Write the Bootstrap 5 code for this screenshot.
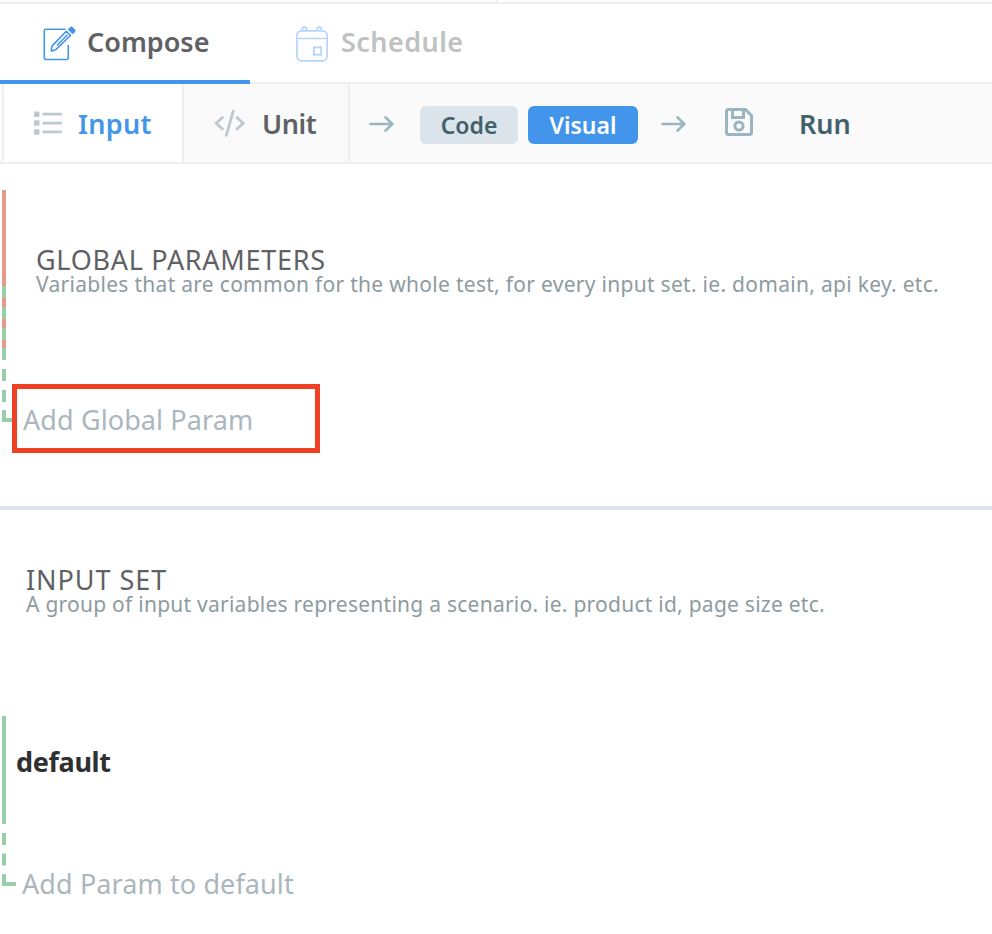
<!DOCTYPE html>
<html lang="en">
<head>
<meta charset="utf-8">
<meta name="viewport" content="width=device-width, initial-scale=1">
<title>Compose</title>
<link rel="stylesheet" href="https://cdn.jsdelivr.net/npm/bootstrap@5.3.0/dist/css/bootstrap.min.css">
<style>
body{font-family:"Noto Sans","Open Sans",sans-serif;font-size:27px;line-height:40px;color:#5f6164;background:#fff;overflow:hidden;white-space:nowrap}
svg{display:block;flex:none}
.topline{height:4px;border-bottom:2px solid #eee}
.topline span{width:2px;height:2px;margin-left:496px;background:#eee}
.maintabs{height:80px;border-bottom:2px solid #eee}
.maintabs .nav-link{height:80px;border:0;border-radius:0;font-weight:600;font-size:27px;color:#5f6164}
.maintabs .active{width:250px;border-bottom:4px solid #4295ea;padding:0 0 0 42px!important}
.maintabs .later{padding:0 0 4px 46px!important;color:#c0c1c2}
.tool{height:80px;background:#fafafa;border-bottom:2px solid #eee;font-weight:600;padding-left:2px}
.cell{height:78px;border-right:2px solid #eee}
.cell-input{width:182px;background:#fff;border-left:2px solid #eee;color:#4295ea;padding-left:30px}
.cell-unit{width:166px;padding-left:30px}
.pill{height:38px;font-size:23px;line-height:38px;font-weight:600;border:0;border-radius:6px;padding:0;margin-top:4px}
.pill-code{width:98px;background:#dce4eb;color:#40606a;margin-left:25px}
.pill-visual{width:110px;background:#4295ea;color:#fff;margin-left:10px}
.arrow-in{margin-left:15px;margin-right:1px;margin-top:1px}
.arrow-out{margin-left:23px;margin-top:1px}
.save{margin-left:38px;margin-right:1px;margin-top:-2px}
.run{color:#40606a;margin-left:45px;padding-top:2px}
.t-compose{margin-left:11px}
.t-schedule{margin-left:13px;letter-spacing:.45px}
.cal{margin-top:3px}
.t-input{margin-left:16px;letter-spacing:.3px;padding-top:2px}
.t-unit{margin-left:16px;letter-spacing:-.4px;padding-top:2px}
.params{height:346px;border-bottom:4px solid #dae4ec;padding:26px 0 0 2px}
.g-head{padding:56px 0 0 24px;height:194px}
.heading{font-size:27px;line-height:28px;font-weight:400;margin:0}
.g-title{letter-spacing:.7px}
.i-title{letter-spacing:.95px}
.hint{font-size:21px;line-height:24px;color:#8d9ba0;margin:-2px 0 0}
.g-hint{letter-spacing:.29px}
.i-hint{letter-spacing:.25px}
.add{color:#abb6bd;letter-spacing:.1px}
.marked{width:308px;height:69px;border:5px solid #ee4023;padding:3px 0 0 6px;background:#fff}
.sets{padding-top:56px}
.i-title,.i-hint{padding-left:26px}
.setrow{padding-left:2px;margin-top:100px}
.setbody{padding-top:26px}
.setname{color:#2f3031;font-weight:700;font-size:27px;letter-spacing:-.35px}
.t-add2{margin:82px 0 0 6px}
</style>
<script src="https://cdn.jsdelivr.net/npm/bootstrap@5.3.0/dist/js/bootstrap.bundle.min.js"></script>
</head>
<body>
<div class="topline"><span class="d-block"></span></div>
<nav class="maintabs nav flex-nowrap">
  <a class="nav-link active d-flex align-items-center" href="#">
    <svg width="34" height="38" viewBox="0 0 34 38" fill="none" stroke="#4295ea" stroke-width="1.6"><path d="M23.500 6.300H3.800a1.500 1.500 0 0 0-1.500 1.500V35a1.500 1.500 0 0 0 1.500 1.500h21a1.500 1.500 0 0 0 1.500-1.500V22"/><path d="M24.300 8.300l4.200 4.200L14 26.400q-2 1.400-4.700 1.500 0-2.900 1.100-5.300zM25.500 11.800L14.800 22.500" stroke-linejoin="round"/><path d="M26.300 6.400l1.900-2q1-.9 2-.1l2.500 2.500q.9 1 0 2l-2.100 2.100z" fill="#4295ea" stroke-width="1"/></svg>
    <span class="t-compose">Compose</span>
  </a>
  <a class="nav-link later d-flex align-items-center" href="#">
    <svg class="cal" width="32" height="36" viewBox="0 0 32 36" fill="none" stroke="#b5d5f8" stroke-width="1.7"><rect x=".9" y="4.800" width="30.200" height="30" rx="4.500"/><path d="M1 12.500h30M6.300 5V2.900q0-1.700 1.600-1.700h1q1.600 0 1.600 1.700V5M21.100 5V2.900q0-1.700 1.600-1.700h1q1.600 0 1.600 1.700V5"/><rect x="17.900" y="21.400" width="7.300" height="7.300" stroke-width="1.900"/></svg>
    <span class="t-schedule">Schedule</span>
  </a>
</nav>
<div class="tool d-flex">
  <div class="cell cell-input d-flex align-items-center">
    <svg width="28" height="24" viewBox="0 0 28 24" fill="#bdc9cf"><rect y=".5" width="5.500" height="5.500" rx="1"/><rect y="9.300" width="5.500" height="5.500" rx="1"/><rect y="18.200" width="5.500" height="5.500" rx="1"/><rect x="8.500" y="1.800" width="19.500" height="2.700" rx="1"/><rect x="8.500" y="10.700" width="19.500" height="2.700" rx="1"/><rect x="8.500" y="19.500" width="19.500" height="2.700" rx="1"/></svg>
    <span class="t-input">Input</span>
  </div>
  <div class="cell cell-unit d-flex align-items-center">
    <svg width="32" height="28" viewBox="0 0 32 28" fill="none" stroke="#bdc9cf" stroke-width="2.800"><path d="M9.200 7.800L2.200 14.300l7 6.500M22.200 7.800l7 6.500-7 6.500M19.500 1L12 27.500"/></svg>
    <span class="t-unit">Unit</span>
  </div>
  <div class="d-flex align-items-center">
    <svg class="arrow-in" width="29" height="18" viewBox="0 0 29 18" fill="none" stroke="#9ab5bf" stroke-width="2.700" stroke-linecap="round" stroke-linejoin="round"><path d="M5.500 9h22M20.500 2.400L27.300 9l-6.800 6.600"/></svg>
    <button type="button" class="btn pill pill-code">Code</button>
    <button type="button" class="btn pill pill-visual">Visual</button>
    <svg class="arrow-out" width="26" height="18" viewBox="4 0 26 18" fill="none" stroke="#9ab5bf" stroke-width="2.700" stroke-linecap="round" stroke-linejoin="round"><path d="M5.500 9h22M20.500 2.400L27.300 9l-6.800 6.600"/></svg>
    <svg class="save" width="28" height="28" viewBox="0 0 28 28" fill="none" stroke="#9ab5bf" stroke-width="3"><path d="M3 1.500h17.500l6 6V25a1.500 1.500 0 0 1-1.500 1.500H3A1.500 1.500 0 0 1 1.500 25V3A1.500 1.500 0 0 1 3 1.500zM7.500 2v7.500h11V2"/><circle cx="14" cy="18" r="4.100"/></svg>
    <span class="run">Run</span>
  </div>
</div>
<section class="params d-flex">
  <svg width="10" height="234" viewBox="0 0 10 234"><path fill="#e59a8b" d="M0 0h4v168H0z"/><path fill="#99ceaa" d="M0 96h4v12H0zM0 117h4v12H0zM0 138h4v12H0zM0 158h4v12H0zM0 179h4v12H0zM0 200h4v12H0zM0 220h4v8h6v4H0z"/></svg>
  <div>
    <div class="g-head"><h2 class="heading g-title">GLOBAL PARAMETERS</h2><p class="hint g-hint">Variables that are common for the whole test, for every input set. ie. domain, api key. etc.</p></div>
    <div class="marked add d-flex align-items-center"><span>Add Global Param</span></div>
  </div>
</section>
<section class="sets">
  <h2 class="heading i-title">INPUT SET</h2>
  <p class="hint i-hint">A group of input variables representing a scenario. ie. product id, page size etc.</p>
  <div class="d-flex setrow">
    <svg width="14" height="170" viewBox="0 0 14 170" fill="#99ceaa"><path d="M0 0h4v108H0zM0 117h4v12H0zM0 137.500h4v12H0zM0 158h4v8h10v4H0z"/></svg>
    <div class="setbody"><div class="setname">default</div><div class="add t-add2">Add Param to default</div></div>
  </div>
</section>
</body>
</html>
